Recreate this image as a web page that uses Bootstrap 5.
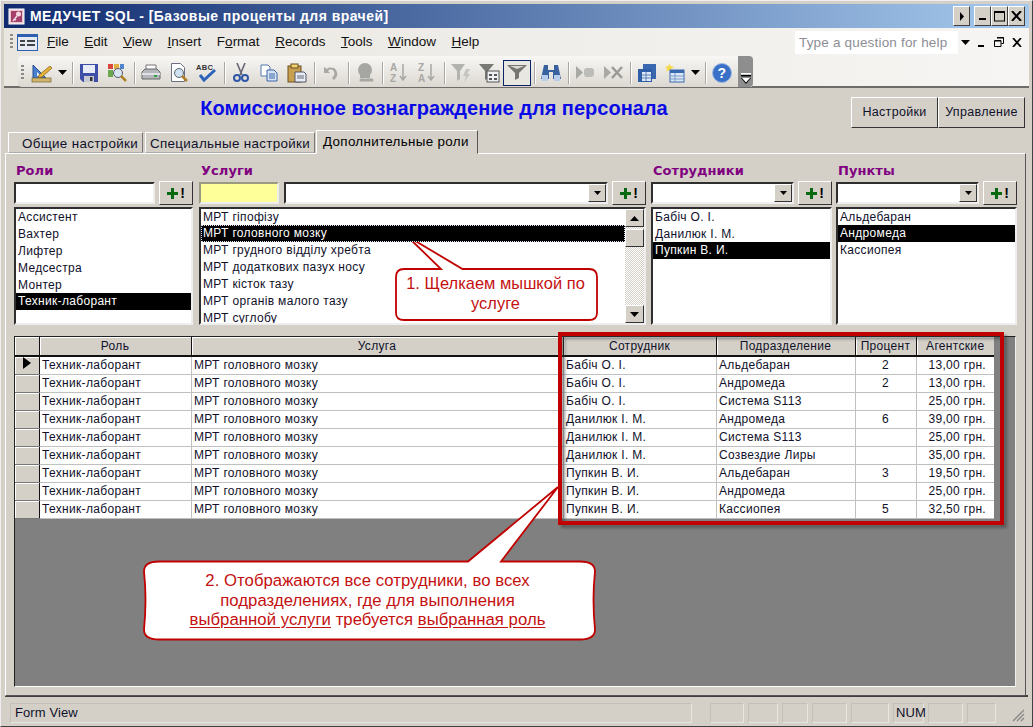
<!DOCTYPE html>
<html lang="ru">
<head>
<meta charset="UTF-8">
<title>МЕДУЧЕТ SQL</title>
<link href="https://cdn.jsdelivr.net/npm/bootstrap@5.3.0/dist/css/bootstrap.min.css" rel="stylesheet">
<style>
html,body{margin:0;height:727px;overflow:hidden;background:#d4d0c8}
body{font:12px/17px "Liberation Sans",Arial,sans-serif;letter-spacing:.32px;color:#10102a}
.app{position:relative;width:1033px;height:727px;padding:4px 4px 4px 4px;border:1px solid #9a9690;border-top-color:#eee;border-left-color:#eee;border-bottom-color:#404040;border-right-color:#404040}
/* title bar */
.titlebar{height:24px;margin:-1px -1px 0;background:linear-gradient(90deg,#0f2a6f,#a6caee);color:#fff;font:bold 14px/24px "Liberation Sans",sans-serif;letter-spacing:.45px;padding-left:4px;gap:4px}
.titlebar .caption{margin-left:1px}
.winbtn{width:17px;height:20px;background:#d4d0c8;border:1px solid;border-color:#fff #404040 #404040 #fff;display:flex;align-items:center;justify-content:center}
/* command bars */
.bars{margin:0 -1px;background:linear-gradient(90deg,#e9e6e0,#f6f5f3);height:60px;border-bottom:2px solid #6e6c68}
.menubar{height:28px;padding-left:6px}
.menubar a{color:#111;text-decoration:none;font-size:13.5px;letter-spacing:0;line-height:28px}
.menu-items{gap:15.5px;margin-left:9px}
.grip{width:3px;height:16px;background:repeating-linear-gradient(#8c8a86 0 2px,transparent 2px 4px)}
.helpbox{width:163px;height:23px;background:#fff;color:#8d8d95;font-size:13.5px;line-height:23px;padding-left:4px;letter-spacing:.18px;margin-left:auto}
.mdi-ctl{width:71px;padding:0 7px 0 3px}
.toolbar{height:31px;width:734px;margin-left:14px;border-radius:4px 0 0 4px;background:linear-gradient(#f8f7f5,#dcd8d1);padding-left:3px;padding-top:2px;position:relative}
.tb{width:28px;height:26px;display:flex;align-items:center;justify-content:center;flex:none}
.tb.arrow{width:13px}
.tb.on{background:#e8e7e2;border:1.5px solid #0a246a}
.tbsep{width:1px;height:22px;background:#a8a6a0;box-shadow:1px 0 #fff;margin:0 2.5px;flex:none}
.tbend{position:absolute;left:720px;top:0;width:15px;height:31px;background:#8e8e8e;border-radius:0 4px 4px 0;display:flex;align-items:flex-end;justify-content:center;padding-bottom:3px}
/* form */
.form-area{height:608px;margin-top:1px;border-bottom:2px solid #404040}
.form-head{height:40px;padding:8px 3px 0 0;position:relative}
.form-title{position:absolute;left:-81px;top:6px;width:1020px;text-align:center;font:bold 20px/26px "Liberation Sans",sans-serif;letter-spacing:0;color:#0a0ae6}
.fbtn{height:31px;border:1px solid;border-color:#fff #333 #333 #fff;border-radius:0;background:#d4d0c8;font-size:12.5px;letter-spacing:.32px;color:#10102a;padding:0;width:87px;flex:none;line-height:27px}
.nav-tabs{border:0;padding-left:3px;height:24px;gap:2px;align-items:flex-end}
.nav-tabs .nav-link{height:21px;padding:2px 0 0 13px;border:1px solid;border-color:#fff #777 #aaa #fff;border-radius:0;color:#10102a;background:#d4d0c8;margin:0;line-height:18px;font-size:13.4px}
.nav-tabs .nav-link.t1{width:135px}
.nav-tabs .nav-link.t2{width:170px;padding-left:4px}
.nav-tabs .nav-link.active{height:24px;width:162px;padding-left:6px;background:#d4d0c8;border-color:#fff #555 #d4d0c8 #fff;position:relative;top:1px;margin-left:-1px}
.panel{height:543px;width:1021px;border:1px solid;border-color:#fff #555 #555 #fff;padding:8px 8px 0 8px}
.filters{gap:6px;height:169px}
.fcol{flex:none}
.c-roles{width:179px}.c-serv{width:447px}.c-staff{width:181px;margin-left:-1px}.c-pts{width:181px;margin-left:-2px}
.flabel{font:bold 13px/18px "DejaVu Sans",sans-serif;letter-spacing:.05px;color:#800080;height:20px;padding-left:2px}
.sunk{background:#fff;border:2px solid;border-color:#2f2f2f #eee #eee #2f2f2f;border-radius:0;height:22px;padding:0;min-height:0}
.sunk.yellow{background:#ffff99;width:80px;flex:none;margin-right:5px;border-color:#9a9a80 #eee #eee #9a9a80}
.dropbtn{position:absolute;right:0;top:0;width:18px;height:18px;background:#d4d0c8;border:1px solid;border-color:#fff #333 #333 #fff;display:flex;align-items:center;justify-content:center}
.plusbtn{width:34px;height:24px;margin-top:-1px;padding:0;flex:none;background:#d4d0c8;border:1px solid;border-color:#fff #333 #333 #fff;border-radius:0;display:flex;align-items:center;justify-content:center;gap:2px;font:bold 14px/1 "Liberation Sans",sans-serif;color:#000}
.list-group.lb{height:118px;margin-top:2px;background:#fff;border:2px solid;border-color:#2f2f2f #eee #eee #2f2f2f;border-radius:0;display:block;overflow:hidden}
.lb .list-group-item{padding:0 0 0 2px;height:17px;border:0;border-radius:0;background:transparent;color:#10102a;line-height:16px;white-space:nowrap}
.lb .list-group-item.active{background:#000;color:#fff}
.lb .list-group-item.focus{outline:1px dotted #dde;outline-offset:-1px}
.sb{width:19px;flex:none;margin-left:auto;background:repeating-conic-gradient(#d4d0c8 0 25%,#fff 0 50%) 0 0/2px 2px;height:100%;display:flex;flex-direction:column}
.sbb{height:18px;width:19px;flex:none;background:#d4d0c8;border:1px solid;border-color:#fff #333 #333 #fff;display:flex;align-items:center;justify-content:center}
.sb .thumb{margin-top:2px}
.sb .sbb:last-child{margin-top:auto}
/* datasheet */
.sheet{height:351px;margin-top:5px;width:1002px;background:#808080;border:1px solid;border-color:#222 #eee #fff #222}
.table.ds{table-layout:fixed;width:979px;margin:0;border-collapse:collapse;--bs-table-bg:#fff;--bs-table-color:#10102a;font-size:12px;line-height:17px}
.ds .w-sel{width:24px}.ds .w-role{width:152px}.ds .w-serv{width:372px}.ds .w-emp{width:153px}.ds .w-dep{width:139px}.ds .w-pct{width:61px}.ds .w-fee{width:78px}
.ds td,.ds th{padding:0 0 0 2.500px;height:18px;border:0;border-right:1px solid #c0c0c0;border-bottom:1px solid #c0c0c0;white-space:nowrap;overflow:hidden;font-weight:400}
.ds th{background:#d4d0c8;text-align:center;height:19px;padding:0;border-right:1px solid #111;border-bottom:2px solid #111;box-shadow:inset 1px 1px #fff}
.ds th:last-child,.ds td:last-child{border-right:0}
.ds .sel{background:#d4d0c8;padding:0;box-shadow:inset 1px 1px #fff;border-right:1px solid #111;border-bottom:1px solid #777}
.ds .num{text-align:center;padding:0}
.ds .money{text-align:right;padding:0 8px 0 0}
/* status bar */
.statusbar{height:21px;margin-top:6px;padding-left:5px;font-size:13px;gap:4px;color:#10102a;letter-spacing:.1px;position:relative}
.sp{height:20px;border:1px solid;border-color:#c4c0b8 #e8e6e0 #e8e6e0 #c4c0b8;line-height:18px;padding-left:2px;flex:none}
.sp.main{width:682px;padding-left:4px;margin-right:14px}
.w1{width:34px}.w2{width:30px}.w3{width:26px}.w4{width:35px}.w5{width:38px}.w6{width:31px}.w7{width:35px}.w8{width:29px}
.grip-se{position:absolute;right:3px;bottom:1px}
/* callouts */
.overlay{position:absolute;left:0;top:0;pointer-events:none}
.frame-shadow{filter:blur(1.500px)}
.note{position:absolute;font:16.4px/19.7px "Liberation Sans",Arial,sans-serif;letter-spacing:.05px;color:#c41010;text-align:center}
.note-1{left:395px;top:273px;width:199px}
.note-2{left:141px;top:570px;width:451px;font-size:16.7px}
.note-2 u{text-underline-offset:2px}
</style>
</head>
<body>
<div class="app d-flex flex-column">

  <!-- Title bar -->
  <div class="titlebar d-flex align-items-center">
    <svg width="17" height="17" viewBox="0 0 17 17"><rect x="1" y="1" width="15" height="15" fill="#e6c9d2" stroke="#fff"/><rect x="3" y="3" width="11" height="11" fill="#a5406a"/><circle cx="10.500" cy="6" r="2.500" fill="#f2d6e0"/><path d="M9 8l-4 5 M6 11l2 1" stroke="#f2d6e0" stroke-width="1.500" fill="none"/></svg>
    <span class="caption flex-grow-1">МЕДУЧЕТ SQL - [Базовые проценты для врачей]</span>
    <div class="d-flex gap-0 me-1">
      <span class="winbtn"><svg width="5" height="9"><path d="M1 0l4 4.500-4 4.500z" fill="#000"/></svg></span>
      <span class="winbtn ms-1"><svg width="8" height="10"><rect y="7" width="7" height="2" fill="#000"/></svg></span>
      <span class="winbtn ms-0"><svg width="11" height="11"><rect x=".5" y="1" width="10" height="9" fill="none" stroke="#000"/><rect width="11" height="2" fill="#000"/></svg></span>
      <span class="winbtn"><svg width="11" height="10"><path d="M1 0l9 10M10 0l-9 10" stroke="#000" stroke-width="2"/></svg></span>
    </div>
  </div>

  <!-- Menu and toolbar -->
  <div class="bars">
    <div class="menubar d-flex align-items-center">
      <span class="grip"></span>
      <svg class="ms-1" width="21" height="17" viewBox="0 0 21 17"><rect width="21" height="17" fill="#2f5fb0"/><rect x="1" y="3" width="19" height="13" fill="#e6ebf2"/><path d="M3 6h5v2H3zM3 10h5v2H3zM10 6h8v2h-8zM10 10h8v2h-8z" fill="#444"/></svg>
      <div class="d-flex menu-items">
        <a href="#"><u>F</u>ile</a><a href="#"><u>E</u>dit</a><a href="#"><u>V</u>iew</a><a href="#"><u>I</u>nsert</a><a href="#">F<u>o</u>rmat</a><a href="#"><u>R</u>ecords</a><a href="#"><u>T</u>ools</a><a href="#"><u>W</u>indow</a><a href="#"><u>H</u>elp</a>
      </div>
      <div class="helpbox">Type a question for help</div>
      <div class="mdi-ctl d-flex align-items-center justify-content-between">
        <svg width="9" height="5"><path d="M0 0h9L4.500 5z" fill="#000"/></svg>
        <svg width="8" height="10"><rect y="8" width="6" height="2" fill="#000"/></svg>
        <svg width="10" height="10"><path d="M3 .5h6.500v6h-2M.5 3.500h6.500v6H.5z M3 1h7M1 4h6" fill="none" stroke="#000"/></svg>
        <svg width="10" height="9"><path d="M1 0l8 9M9 0l-8 9" stroke="#000" stroke-width="1.700"/></svg>
      </div>
    </div>
    <div class="toolbar d-flex align-items-center">
      <span class="grip me-1"></span>
      <span class="tb"><svg width="22" height="20" viewBox="0 0 22 20"><path d="M2 2v13h13z" fill="#4a7fd0" stroke="#24508f"/><path d="M6 9v4h4z" fill="#e8eef8"/><path d="M8 12L19 3l2 2L11 14l-4 1z" fill="#e8b23a" stroke="#7a5a10" stroke-width=".7"/><rect x="1" y="15" width="19" height="4" fill="#d2b470" stroke="#7a6430" stroke-width=".7"/></svg></span>
      <span class="tb arrow"><svg width="9" height="5"><path d="M0 0h9L4.500 5z" fill="#000"/></svg></span>
      <span class="tbsep"></span>
      <span class="tb"><svg width="18" height="18" viewBox="0 0 18 18"><path d="M0 0h18v18H3L0 15z" fill="#3e4fa8"/><rect x="3" y="1" width="12" height="8" fill="#e8ecf6"/><rect x="4" y="12" width="10" height="6" fill="#c8c8d0"/><rect x="10" y="13" width="2.500" height="4" fill="#333"/></svg></span>
      <span class="tb"><svg width="20" height="20" viewBox="0 0 20 20"><rect x="1" y="1" width="5" height="5" fill="#d8483a"/><rect x="7" y="1" width="5" height="5" fill="#e0b040"/><rect x="13" y="1" width="4" height="5" fill="#4f86cc"/><rect x="1" y="7" width="5" height="7" fill="#6aa84f"/><circle cx="11" cy="10" r="4.500" fill="#d8e6f4" stroke="#556"/><path d="M14 13l5 5" stroke="#b08028" stroke-width="2.500"/></svg></span>
      <span class="tbsep"></span>
      <span class="tb"><svg width="20" height="18" viewBox="0 0 20 18"><path d="M5 1h10v5H5z" fill="#fff" stroke="#777"/><path d="M1 8l3-3h12l3 3v7H1z" fill="#b4b8bc" stroke="#666"/><rect x="1" y="9" width="18" height="2" fill="#dfe1e3"/><rect x="13" y="11" width="3" height="2" fill="#2fa040"/></svg></span>
      <span class="tb"><svg width="19" height="20" viewBox="0 0 19 20"><path d="M1.500.5h9l4 4v14h-13z" fill="#fff" stroke="#6a7080"/><circle cx="9" cy="10" r="4.500" fill="#cfe0f2" stroke="#566"/><path d="M12 13l5 5" stroke="#b08028" stroke-width="2.500"/></svg></span>
      <span class="tb"><svg width="22" height="20" viewBox="0 0 22 20"><text x="0" y="7" font-family="Liberation Sans" font-size="7.500" font-weight="700" fill="#333">ABC</text><path d="M4 12l4 5L19 7" fill="none" stroke="#2c62b8" stroke-width="3"/></svg></span>
      <span class="tbsep"></span>
      <span class="tb"><svg width="16" height="20" viewBox="0 0 16 20"><path d="M4 0l5 12M12 0L7 12" stroke="#667" stroke-width="1.600"/><circle cx="4" cy="15" r="3" fill="none" stroke="#2f57a8" stroke-width="2"/><circle cx="12" cy="15" r="3" fill="none" stroke="#2f57a8" stroke-width="2"/></svg></span>
      <span class="tb"><svg width="18" height="18" viewBox="0 0 18 18"><path d="M1 1h7l2 2v9H1z" fill="#fff" stroke="#5577aa"/><path d="M7 6h7l3 3v8H7z" fill="#d6e4f6" stroke="#3d64a8"/><path d="M9 10h6M9 12h6M9 14h6" stroke="#3d64a8"/></svg></span>
      <span class="tb"><svg width="20" height="20" viewBox="0 0 20 20"><rect x="1" y="3" width="13" height="16" fill="#c9a050" stroke="#6a5020"/><rect x="4" y="1" width="7" height="4" fill="#f0d070" stroke="#6a5020"/><path d="M8 9h9l2 2v8H8z" fill="#e6edf5" stroke="#556"/><path d="M10 13h7M10 15h7" stroke="#667"/></svg></span>
      <span class="tbsep"></span>
      <span class="tb"><svg width="16" height="16" viewBox="0 0 16 16"><path d="M1 2v6h6L5 6c2-2 5-2 6 1 1 2 0 4-2 6l2 2c4-3 4-7 2-10-2-3-7-3-9-1z" fill="#aaa8a2"/></svg></span>
      <span class="tbsep"></span>
      <span class="tb"><svg width="19" height="20" viewBox="0 0 19 20"><circle cx="9" cy="7" r="7" fill="#a6a6a2"/><path d="M4 11h10v4H4z" fill="#a6a6a2"/><path d="M5 17h4M11 17h5" stroke="#a6a6a2" stroke-width="3" stroke-linecap="round"/></svg></span>
      <span class="tbsep"></span>
      <span class="tb"><svg width="18" height="21" viewBox="0 0 18 21"><text x="0" y="9" font-family="Liberation Sans" font-size="10" font-weight="700" fill="#a8a8a4">A</text><text x="0" y="20" font-family="Liberation Sans" font-size="10" font-weight="700" fill="#a8a8a4">Z</text><path d="M13 2v15M10 14l3 4 3-4" fill="none" stroke="#a8a8a4" stroke-width="1.500"/></svg></span>
      <span class="tb"><svg width="18" height="21" viewBox="0 0 18 21"><text x="0" y="9" font-family="Liberation Sans" font-size="10" font-weight="700" fill="#a8a8a4">Z</text><text x="0" y="20" font-family="Liberation Sans" font-size="10" font-weight="700" fill="#a8a8a4">A</text><path d="M13 2v15M10 14l3 4 3-4" fill="none" stroke="#a8a8a4" stroke-width="1.500"/></svg></span>
      <span class="tbsep"></span>
      <span class="tb"><svg width="20" height="20" viewBox="0 0 20 20"><path d="M0 1h14L9 8v8l-3 2V8z" fill="#b2b2ae"/><path d="M15 6h4l-3 5h3l-6 8 2-6h-3z" fill="#c4c4c0"/></svg></span>
      <span class="tb"><svg width="21" height="20" viewBox="0 0 21 20"><path d="M0 1h15L9 8v7l-3 2V8z" fill="#787874"/><rect x="8" y="8" width="12" height="11" fill="#eef0f2" stroke="#555"/><path d="M10 11h3v2h-3zM15 11h3v2h-3zM10 15h3v2h-3zM15 15h3v2h-3z" fill="#555"/></svg></span>
      <span class="tb on"><svg width="20" height="15" viewBox="0 0 20 15"><path d="M0 0h20l-8 8v5l-4 2V8z" fill="#777772"/><path d="M3 1h14l-7 3z" fill="#d8d8d4"/></svg></span>
      <span class="tbsep"></span>
      <span class="tb"><svg width="20" height="18" viewBox="0 0 20 18"><path d="M3 1h4v5h6V1h4l3 14h-8V8H8v7H0z" fill="#39609f"/><rect x="1" y="11" width="6" height="6" fill="#b8ccec"/><rect x="13" y="11" width="6" height="6" fill="#b8ccec"/></svg></span>
      <span class="tbsep"></span>
      <span class="tb"><svg width="19" height="13" viewBox="0 0 19 13"><path d="M0 0l7 6.500L0 13z" fill="#a8a8a4"/><rect x="8" y="2" width="10" height="9" rx="3" fill="#bcbcb8"/></svg></span>
      <span class="tb"><svg width="19" height="13" viewBox="0 0 19 13"><path d="M0 0l7 6.500L0 13z" fill="#a8a8a4"/><path d="M8 1l10 11M18 1L8 12" stroke="#9a9a96" stroke-width="2.500"/></svg></span>
      <span class="tbsep"></span>
      <span class="tb"><svg width="20" height="20" viewBox="0 0 20 20"><rect x="6" y="1" width="13" height="15" fill="#3a68b0"/><rect x="1" y="6" width="14" height="13" fill="#2f5ea8"/><path d="M5 9h9v9H5z" fill="#dce8f6"/><path d="M5 12h9M5 15h9M9 9v9" stroke="#5a80b8"/></svg></span>
      <span class="tb"><svg width="20" height="20" viewBox="0 0 20 20"><path d="M4 0l1.500 3L9 4 6 6l1 3-3-2-3 2 1-3-2-2 3.500-1z" fill="#f6d848"/><rect x="5" y="7" width="14" height="12" fill="#dce8f6" stroke="#3a68b0"/><rect x="5" y="7" width="14" height="3" fill="#3a68b0"/><path d="M5 13h14M5 16h14M10 10v9" stroke="#7a9ac8"/></svg></span>
      <span class="tb arrow"><svg width="9" height="5"><path d="M0 0h9L4.500 5z" fill="#000"/></svg></span>
      <span class="tbsep"></span>
      <span class="tb"><svg width="20" height="20" viewBox="0 0 20 20"><circle cx="10" cy="10" r="9.500" fill="#3a70c8" stroke="#9ab8e4"/><text x="10" y="15" text-anchor="middle" font-family="Liberation Sans" font-size="14" font-weight="700" fill="#fff">?</text></svg></span>
      <span class="tbend"><svg width="10" height="11"><rect y="0" width="10" height="1.500" fill="#fff"/><rect y="2" width="10" height="1.500" fill="#000"/><path d="M0 5h10l-5 6z" fill="#000"/><path d="M1 5h8l-4 4.500z" fill="#fff"/></svg></span>
    </div>
  </div>

  <!-- Form -->
  <div class="form-area">
    <div class="form-head d-flex justify-content-end">
      <div class="form-title">Комиссионное вознаграждение для персонала</div>
      <button class="btn fbtn" type="button">Настройки</button>
      <button class="btn fbtn" type="button">Управление</button>
    </div>
    <ul class="nav nav-tabs">
      <li class="nav-item"><a class="nav-link t1" href="#">Общие настройки</a></li>
      <li class="nav-item"><a class="nav-link t2" href="#">Специальные настройки</a></li>
      <li class="nav-item"><a class="nav-link active" href="#">Дополнительные роли</a></li>
    </ul>
    <div class="panel">
      <div class="filters d-flex">
        <div class="fcol c-roles">
          <div class="flabel">Роли</div>
          <div class="d-flex"><div class="sunk flex-grow-1"></div><button class="plusbtn btn ms-1" type="button"><svg width="11" height="11"><path d="M4 0h3v4h4v3H7v4H4V7H0V4h4z" fill="#086a10"/></svg>!</button></div>
          <ul class="list-group lb">
            <li class="list-group-item">Ассистент</li>
            <li class="list-group-item">Вахтер</li>
            <li class="list-group-item">Лифтер</li>
            <li class="list-group-item">Медсестра</li>
            <li class="list-group-item">Монтер</li>
            <li class="list-group-item active">Техник-лаборант</li>
          </ul>
        </div>
        <div class="fcol c-serv">
          <div class="flabel">Услуги</div>
          <div class="d-flex">
            <div class="sunk yellow"></div>
            <div class="sunk flex-grow-1 position-relative"><span class="dropbtn"><svg width="7" height="4"><path d="M0 0h7L3.500 4z" fill="#000"/></svg></span></div>
            <button class="plusbtn btn ms-1" type="button"><svg width="11" height="11"><path d="M4 0h3v4h4v3H7v4H4V7H0V4h4z" fill="#086a10"/></svg>!</button>
          </div>
          <div class="list-group lb d-flex flex-row">
            <ul class="list-unstyled m-0 flex-grow-1">
              <li class="list-group-item">МРТ гіпофізу</li>
              <li class="list-group-item active focus">МРТ головного мозку</li>
              <li class="list-group-item">МРТ грудного відділу хребта</li>
              <li class="list-group-item">МРТ додаткових пазух носу</li>
              <li class="list-group-item">МРТ кісток тазу</li>
              <li class="list-group-item">МРТ органів малого тазу</li>
              <li class="list-group-item">МРТ суглобу</li>
            </ul>
            <div class="sb">
              <span class="sbb"><svg width="9" height="5"><path d="M0 5h9L4.500 0z" fill="#000"/></svg></span>
              <span class="sbb thumb"></span>
              <span class="sbb"><svg width="9" height="5"><path d="M0 0h9L4.500 5z" fill="#000"/></svg></span>
            </div>
          </div>
        </div>
        <div class="fcol c-staff">
          <div class="flabel">Сотрудники</div>
          <div class="d-flex"><div class="sunk flex-grow-1 position-relative"><span class="dropbtn"><svg width="7" height="4"><path d="M0 0h7L3.500 4z" fill="#000"/></svg></span></div><button class="plusbtn btn ms-1" type="button"><svg width="11" height="11"><path d="M4 0h3v4h4v3H7v4H4V7H0V4h4z" fill="#086a10"/></svg>!</button></div>
          <ul class="list-group lb">
            <li class="list-group-item">Бабіч О. І.</li>
            <li class="list-group-item">Данилюк І. М.</li>
            <li class="list-group-item active">Пупкин В. И.</li>
          </ul>
        </div>
        <div class="fcol c-pts">
          <div class="flabel">Пункты</div>
          <div class="d-flex"><div class="sunk flex-grow-1 position-relative"><span class="dropbtn"><svg width="7" height="4"><path d="M0 0h7L3.500 4z" fill="#000"/></svg></span></div><button class="plusbtn btn ms-1" type="button"><svg width="11" height="11"><path d="M4 0h3v4h4v3H7v4H4V7H0V4h4z" fill="#086a10"/></svg>!</button></div>
          <ul class="list-group lb">
            <li class="list-group-item">Альдебаран</li>
            <li class="list-group-item active">Андромеда</li>
            <li class="list-group-item">Кассиопея</li>
          </ul>
        </div>
      </div>
      <div class="sheet">
        <table class="table ds">
          <colgroup><col class="w-sel"><col class="w-role"><col class="w-serv"><col class="w-emp"><col class="w-dep"><col class="w-pct"><col class="w-fee"></colgroup>
          <thead><tr><th></th><th>Роль</th><th>Услуга</th><th>Сотрудник</th><th>Подразделение</th><th>Процент</th><th>Агентские</th></tr></thead>
          <tbody>
            <tr><td class="sel"><svg class="d-block ms-2" width="8" height="12"><path d="M0 0l8 6-8 6z" fill="#000"/></svg></td><td>Техник-лаборант</td><td>МРТ головного мозку</td><td>Бабіч О. І.</td><td>Альдебаран</td><td class="num">2</td><td class="money">13,00 грн.</td></tr>
            <tr><td class="sel"></td><td>Техник-лаборант</td><td>МРТ головного мозку</td><td>Бабіч О. І.</td><td>Андромеда</td><td class="num">2</td><td class="money">13,00 грн.</td></tr>
            <tr><td class="sel"></td><td>Техник-лаборант</td><td>МРТ головного мозку</td><td>Бабіч О. І.</td><td>Система S113</td><td class="num"></td><td class="money">25,00 грн.</td></tr>
            <tr><td class="sel"></td><td>Техник-лаборант</td><td>МРТ головного мозку</td><td>Данилюк І. М.</td><td>Андромеда</td><td class="num">6</td><td class="money">39,00 грн.</td></tr>
            <tr><td class="sel"></td><td>Техник-лаборант</td><td>МРТ головного мозку</td><td>Данилюк І. М.</td><td>Система S113</td><td class="num"></td><td class="money">25,00 грн.</td></tr>
            <tr><td class="sel"></td><td>Техник-лаборант</td><td>МРТ головного мозку</td><td>Данилюк І. М.</td><td>Созвездие Лиры</td><td class="num"></td><td class="money">35,00 грн.</td></tr>
            <tr><td class="sel"></td><td>Техник-лаборант</td><td>МРТ головного мозку</td><td>Пупкин В. И.</td><td>Альдебаран</td><td class="num">3</td><td class="money">19,50 грн.</td></tr>
            <tr><td class="sel"></td><td>Техник-лаборант</td><td>МРТ головного мозку</td><td>Пупкин В. И.</td><td>Андромеда</td><td class="num"></td><td class="money">25,00 грн.</td></tr>
            <tr><td class="sel"></td><td>Техник-лаборант</td><td>МРТ головного мозку</td><td>Пупкин В. И.</td><td>Кассиопея</td><td class="num">5</td><td class="money">32,50 грн.</td></tr>
          </tbody>
        </table>
      </div>
    </div>
  </div>

  <!-- Status bar -->
  <div class="statusbar d-flex">
    <div class="sp main">Form View</div>
    <div class="sp w1"></div><div class="sp w2"></div><div class="sp w3"></div><div class="sp w4"></div><div class="sp w5"></div><div class="sp w6">NUM</div><div class="sp w7"></div><div class="sp w8"></div>
    <svg class="grip-se" width="14" height="14"><path d="M13 2L2 13M13 6l-7 7M13 10l-3 3" stroke="#888" stroke-width="1.300"/></svg>
  </div>

  <!-- Annotations -->
  <svg class="overlay" width="1033" height="727" viewBox="0 0 1033 727">
    <rect class="frame-shadow" x="562" y="336" width="442" height="189" fill="none" stroke="#333" stroke-opacity=".5" stroke-width="4"/>
    <rect x="559" y="333" width="442" height="189" fill="none" stroke="#c00000" stroke-width="4"/>
    <path d="M406 235L440 268H403q-8 0-8 8v36q0 7 8 7H588q8 0 8-7V276q0-8-8-8H461.500z" fill="#fff" stroke="#c00000" stroke-width="1.800"/>
    <path d="M557 486L467 560.500H158q-15 0-15 10 3 28 0 58 0 10 15 10H579q15 0 15-10-3-30 0-58 0-10-15-10H500z" fill="#fff" stroke="#c00000" stroke-width="1.800"/>
  </svg>
  <div class="note note-1">1. Щелкаем мышкой по<br>услуге</div>
  <div class="note note-2">2. Отображаются все сотрудники, во всех<br>подразделениях, где для выполнения<br><u>выбранной услуги</u> требуется <u>выбранная роль</u></div>
</div>
<script src="https://cdn.jsdelivr.net/npm/bootstrap@5.3.0/dist/js/bootstrap.bundle.min.js"></script>
</body>
</html>
